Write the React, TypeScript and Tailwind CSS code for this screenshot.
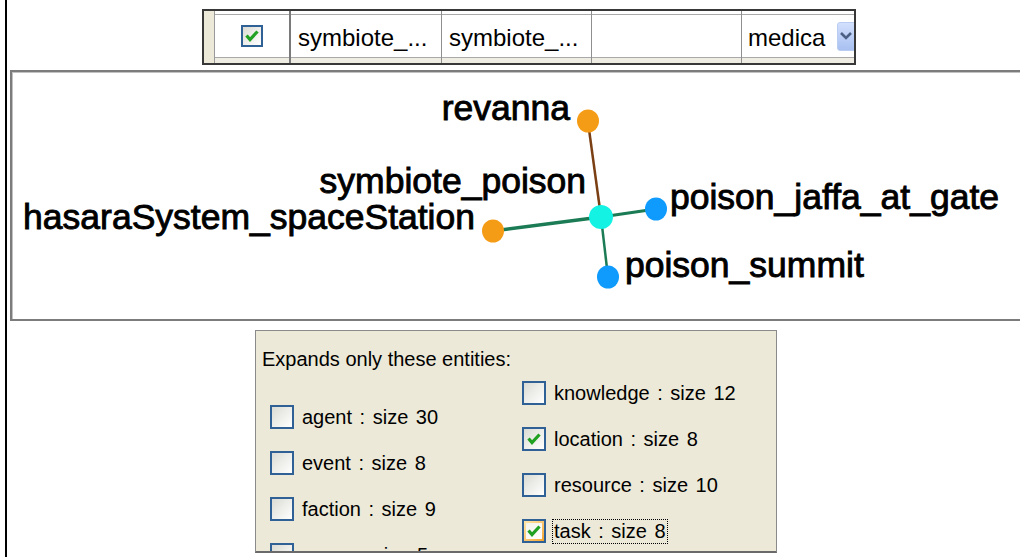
import clsx from "clsx";

const LEFT_ITEMS = [
  { label: "agent : size 30" },
  { label: "event : size 8" },
  { label: "faction : size 9" },
  { label: "group : size 5" },
];

const RIGHT_ITEMS = [
  { label: "knowledge : size 12" },
  { label: "location : size 8", checked: true },
  { label: "resource : size 10" },
  { label: "task : size 8", checked: true, hot: true, focus: true },
];

function Tick() {
  return (
    <svg width="16" height="16" viewBox="0 0 16 16" className="block">
      <path d="M2.5 7.5 L6 11.5 L13.5 3.5" fill="none" stroke="#21a121" strokeWidth="3.2" strokeLinejoin="miter" />
    </svg>
  );
}

function XpCheckbox({ checked, hot, small }: { checked?: boolean; hot?: boolean; small?: boolean }) {
  return (
    <span
      className={clsx(
        "flex shrink-0 border-2 border-[#2f6096]",
        small ? "w-[22px] h-[22px]" : "w-[24px] h-[24px]",
        hot ? "p-[2px] bg-linear-to-br from-[#fde7a8] to-[#f5a524]" : "bg-linear-to-br from-[#dcdcd5] to-white"
      )}
    >
      <span
        className={clsx(
          "flex flex-1 items-center justify-center",
          hot && "bg-linear-to-br from-[#f3f2ea] to-white"
        )}
      >
        {checked && <Tick />}
      </span>
    </span>
  );
}

function Cell({ children, className }: { children?: React.ReactNode; className?: string }) {
  return (
    <div className={clsx("flex flex-col h-full", className)}>
      <div className="h-[3px] bg-white" />
      <div className="h-[44px] border-y border-[#a9a9a9] bg-white flex items-center overflow-hidden">{children}</div>
      <div className="flex-1 bg-[#efede3]" />
    </div>
  );
}

function EntityRow({ label, checked, hot, focus }: { label: string; checked?: boolean; hot?: boolean; focus?: boolean }) {
  return (
    <div className="flex items-center h-[24px]">
      <XpCheckbox checked={checked} hot={hot} />
      <span
        className={clsx(
          "ml-[6px] px-[1px] border leading-[23px] whitespace-nowrap [word-spacing:2px]",
          focus ? "border-dotted border-black" : "border-transparent"
        )}
      >
        {label}
      </span>
    </div>
  );
}

export default function App() {
  return (
    <div className="w-[1020px] h-[557px] overflow-hidden bg-white flex font-['Liberation_Sans',Arial,sans-serif] text-black">
      <div className="ml-[5px] border-l-2 border-black flex-1 flex flex-col">
        {/* row editor strip */}
        <div className="h-[70px] pt-[9px]">
          <div className="ml-[195px] w-[654px] h-[56px] border-2 border-[#383838] flex text-[24px]">
            <div className="w-[11px] h-full bg-[#ece9d8] border-r border-[#9a9a9a]" />
            <Cell className="w-[76px] border-r-2 border-[#7a7a7a]">
              <div className="flex-1 flex justify-center">
                <XpCheckbox checked small />
              </div>
            </Cell>
            <Cell className="w-[151px] border-r border-[#8f8f8f]">
              <span className="pl-[7px] pt-[4px] whitespace-nowrap">symbiote_...</span>
            </Cell>
            <Cell className="w-[150px] border-r border-[#8f8f8f]">
              <span className="pl-[7px] pt-[4px] whitespace-nowrap">symbiote_...</span>
            </Cell>
            <Cell className="w-[150px] border-r border-[#8f8f8f]" />
            <Cell className="flex-1">
              <div className="flex-1 flex items-center justify-between">
                <span className="pl-[6px] pt-[4px] whitespace-nowrap">medica</span>
                <div className="w-[20px] h-[29px] -mr-[3px] rounded-[3px] border border-[#b9cdf3] bg-linear-to-b from-[#d3e0fd] to-[#a8c0f1] flex items-center justify-center">
                  <svg width="14" height="10" viewBox="0 0 14 10" className="block -ml-[3px]">
                    <polyline points="2,2 7,7 12,2" fill="none" stroke="#4d6185" strokeWidth="2.6" />
                  </svg>
                </div>
              </div>
            </Cell>
          </div>
        </div>

        {/* graph view */}
        <div className="ml-[3px] w-[1020px] h-[251px] shrink-0 border-2 border-[#7c7c7c] shadow-[inset_1px_1px_0_#c2c2c2] bg-white">
          <svg width="1016" height="247" viewBox="12 72 1016 247" className="block text-[35.5px]">
            <line x1="588" y1="122" x2="601" y2="217" stroke="#7b3f14" strokeWidth="2.5" />
            <line x1="601" y1="217" x2="493" y2="231" stroke="#1b7b55" strokeWidth="3.5" />
            <line x1="601" y1="217" x2="656" y2="209" stroke="#1b7b55" strokeWidth="3.2" />
            <line x1="601" y1="217" x2="608" y2="277" stroke="#1b7b55" strokeWidth="2.5" />
            <ellipse cx="588" cy="121" rx="11" ry="11.5" fill="#f59c16" />
            <ellipse cx="493" cy="231" rx="11" ry="11.5" fill="#f59c16" />
            <ellipse cx="656" cy="209" rx="11" ry="11.5" fill="#0e9bfd" />
            <ellipse cx="608" cy="277" rx="11" ry="11.5" fill="#0e9bfd" />
            <ellipse cx="601" cy="217" rx="12" ry="12" fill="#14f3e3" />
            <g fill="#000" stroke="#000" strokeWidth="0.9">
              <text x="570" y="120" textAnchor="end">revanna</text>
              <text x="586" y="193" textAnchor="end">symbiote_poison</text>
              <text x="475" y="229" textAnchor="end">hasaraSystem_spaceStation</text>
              <text x="670" y="209">poison_jaffa_at_gate</text>
              <text x="625" y="277">poison_summit</text>
            </g>
          </svg>
        </div>

        {/* entity filter */}
        <div className="ml-[248px] mt-[9px] w-[522px] h-[223px] shrink-0 overflow-hidden bg-[#ece9d8] border border-[#8a8a8a] border-b-2 border-b-[#6a6a6a] text-[20px]">
          <div className="pl-[6px] pt-[17px] leading-[23px]">Expands only these entities:</div>
          <div className="flex pl-[14px] mt-[10px]">
            <div className="w-[252px] pt-[24px] flex flex-col gap-[22px]">
              {LEFT_ITEMS.map((it) => (
                <EntityRow key={it.label} label={it.label} />
              ))}
            </div>
            <div className="flex flex-col gap-[22px]">
              {RIGHT_ITEMS.map((it) => (
                <EntityRow key={it.label} {...it} />
              ))}
            </div>
          </div>
        </div>
      </div>
    </div>
  );
}
